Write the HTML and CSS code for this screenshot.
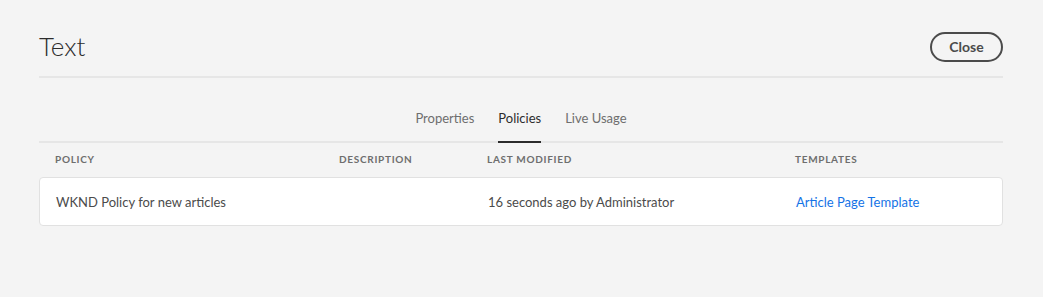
FILE: index.html
```html
<!DOCTYPE html>
<html lang="en">
<head>
    <meta charset="UTF-8">
    <title>Text - Policies</title>
    <link rel="stylesheet" href="styles.css">
</head>
<body>

<div class="dialog">
    <!-- Header with title and close button -->
    <div class="dialog-header">
        <h1>Text</h1>
        <button class="close-btn">Close</button>
    </div>

    <!-- Tabs -->
    <div class="tabs">
        <span class="tab">Properties</span>
        <span class="tab selected">Policies</span>
        <span class="tab">Live Usage</span>
    </div>

    <!-- Policy table -->
    <div class="table">
        <div class="table-head">
            <span>Policy</span>
            <span>Description</span>
            <span>Last Modified</span>
            <span>Templates</span>
        </div>
        <div class="table-row">
            <span>WKND Policy for new articles</span>
            <span></span>
            <span>16 seconds ago by Administrator</span>
            <a href="#">Article Page Template</a>
        </div>
    </div>
</div>

</body>
</html>
```

FILE: styles.css
```css
body {
    margin: 0;
    background-color: #f4f4f4;
    font-family: 'Lato', 'Open Sans', sans-serif;
    color: #4b4b4b;
}

.dialog {
    padding: 0 40px 0 39px;
}

.dialog-header {
    display: flex;
    justify-content: space-between;
    align-items: center;
    height: 76px;
    border-bottom: 2px solid #e6e6e6;
}

.dialog-header h1 {
    margin: 0;
    padding-top: 16px;
    font-size: 26px;
    font-weight: 300;
    color: #2c2c2c;
}

.close-btn {
    margin-top: 17px;
    width: 73px;
    height: 30px;
    border: 2px solid #4b4b4b;
    border-radius: 15px;
    background: transparent;
    font-family: inherit;
    font-size: 14px;
    font-weight: 700;
    color: #4b4b4b;
}

/* Tabs */
.tabs {
    display: flex;
    justify-content: center;
    gap: 24px;
    margin-top: 30px;
    border-bottom: 2px solid #e6e6e6;
}

.tab {
    font-size: 13px;
    line-height: 20px;
    color: #6e6e6e;
    padding-bottom: 13px;
    margin-bottom: -2px;
    border-bottom: 2px solid transparent;
}

.tab.selected {
    color: #2c2c2c;
    border-bottom-color: #2c2c2c;
}

/* Table */
.table-head,
.table-row {
    display: grid;
    grid-template-columns: 284px 148px 308px 1fr;
    padding-left: 16px;
}

.table-head {
    height: 34px;
    padding-bottom: 3px;
    box-sizing: border-box;
    align-items: center;
    font-size: 10px;
    font-weight: 700;
    letter-spacing: 0.07em;
    text-transform: uppercase;
    color: #6e6e6e;
}

.table-row {
    height: 47px;
    align-items: center;
    background-color: #fff;
    border: 1px solid #e1e1e1;
    border-radius: 4px;
    font-size: 13px;
    color: #4b4b4b;
}

.table-row a {
    color: #1473e6;
    text-decoration: none;
}
```
